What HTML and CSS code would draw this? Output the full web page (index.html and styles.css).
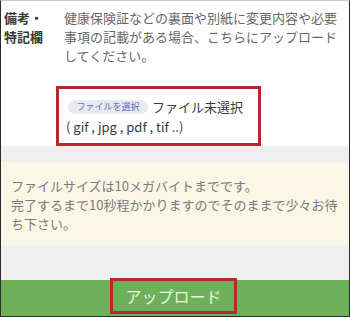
FILE: index.html
```html
<!DOCTYPE html>
<html lang="ja">
<head>
<meta charset="utf-8">
<link rel="stylesheet" href="styles.css">
</head>
<body>
<div class="frame">
  <section class="field">
    <div class="row">
      <div class="label">備考・<br>特記欄</div>
      <p class="desc">健康保険証などの裏面や別紙に変更内容や必要事項の記載がある場合、こちらにアップロードしてください。</p>
    </div>
    <div class="upload">
      <div class="file-line"><span class="pick">ファイルを選択</span><span class="none">ファイル未選択</span></div>
      <div class="types">( gif , jpg , pdf , tif ..)</div>
    </div>
  </section>
  <div class="gap-top"></div>
  <div class="note">ファイルサイズは10メガバイトまでです。<br>完了するまで10秒程かかりますのでそのままで少々お待ち下さい。</div>
  <div class="gap-bottom"></div>
  <div class="bar"><span class="submit">アップロード</span></div>
</div>
</body>
</html>
```
FILE: styles.css
```css
html, body {
  margin: 0;
  padding: 0;
  background: #ffffff;
}
body {
  font-family: "Noto Sans CJK JP", "Noto Sans", sans-serif;
  font-size: 13px;
}
.frame {
  width: 350px;
  height: 317px;
  box-sizing: border-box;
  border: 1px solid #2a2a2a;
  border-top-color: #c8c8c8;
  overflow: hidden;
  display: flex;
  flex-direction: column;
}
.field {
  padding-top: 7px;
  height: 145px;
  box-sizing: border-box;
  background: #ffffff;
}
.row {
  display: flex;
}
.label {
  width: 63px;
  padding-left: 3px;
  box-sizing: border-box;
  flex: none;
  line-height: 19px;
  color: #3a3a3a;
  font-weight: bold;
}
.desc {
  margin: 0;
  padding-right: 6px;
  line-height: 19px;
  color: #666666;
}
.upload {
  margin: 21px 0 0 55px;
  width: 205px;
  height: 60px;
  box-sizing: border-box;
  border: 3px solid #b9272e;
  padding: 8px 0 0 7px;
  background: #ffffff;
}
.file-line {
  display: flex;
  align-items: center;
  height: 20px;
}
.pick {
  margin-left: 2px;
  width: 80px;
  height: 14px;
  border-radius: 7px;
  background: #e8eaf0;
  color: #5b6fc4;
  font-size: 9px;
  line-height: 14px;
  text-align: center;
}
.none {
  margin-left: 4px;
  color: #3a3a3a;
  font-size: 13px;
  line-height: 20px;
}
.types {
  line-height: 20px;
  color: #3a3a3a;
  font-size: 13px;
}
.gap-top {
  height: 16px;
  background: #efefef;
  flex: none;
}
.note {
  flex: none;
  height: 83px;
  box-sizing: border-box;
  padding: 14px 8px 12px 10px;
  background: #fbf7e7;
  color: #7a7a7a;
  line-height: 19px;
}
.gap-bottom {
  flex: none;
  height: 35px;
  background: #efefef;
}
.bar {
  flex: 1;
  background: #6eaf5a;
  display: flex;
  justify-content: center;
}
.submit {
  margin: -2px 0 0 -3px;
  width: 127px;
  height: 36px;
  box-sizing: border-box;
  border: 3px solid #b9272e;
  color: #eaf4e4;
  font-size: 16px;
  line-height: 30px;
  text-align: center;
  position: relative;
}
```
